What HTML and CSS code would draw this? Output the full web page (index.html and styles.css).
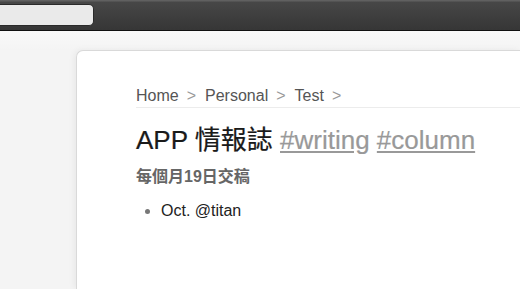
FILE: index.html
```html
<!DOCTYPE html>
<html>
<head>
<meta charset="utf-8">
<link rel="stylesheet" href="styles.css">
</head>
<body>
<header class="topbar">
  <div class="search"></div>
</header>
<main class="stage">
  <section class="card">
    <nav class="crumbs">
      <a class="crumb">Home</a><span class="sep">&gt;</span><a class="crumb">Personal</a><span class="sep">&gt;</span><a class="crumb">Test</a><span class="sep">&gt;</span>
    </nav>
    <h1 class="title">APP 情報誌 <a class="tag">#writing</a> <a class="tag">#column</a></h1>
    <p class="sub">每個月19日交稿</p>
    <ul class="list">
      <li>Oct. @titan</li>
    </ul>
  </section>
</main>
</body>
</html>
```
FILE: styles.css
```css
html, body {
  margin: 0;
  padding: 0;
  height: 100%;
  overflow: hidden;
}
body {
  display: flex;
  flex-direction: column;
  font-family: "Helvetica Neue", "Liberation Sans", Arial, "Noto Sans CJK TC", sans-serif;
  font-size: 16px;
  background: #f5f5f5;
  color: #222;
}
.topbar {
  flex: none;
  height: 31px;
  padding-top: 4px;
  box-sizing: border-box;
  background: linear-gradient(#606060 0, #606060 1px, #474747 2px, #3c3c3c 20px, #363636 30px);
  border-bottom: 1px solid #111;
}
.search {
  width: 94px;
  height: 22px;
  background: #eaeaea;
  border: 1px solid #2a2a2a;
  border-left: none;
  border-radius: 0 5px 5px 0;
  box-sizing: border-box;
}
.stage {
  flex: 1;
  display: flex;
  flex-direction: column;
  min-height: 0;
  padding: 19px 0 0 76px;
  background: linear-gradient(#f9f9f9, #f4f4f4 19px, #f4f4f4);
}
.card {
  flex: 1;
  background: #fff;
  border: 1px solid #d9d9d9;
  border-right: none;
  border-bottom: none;
  border-top-left-radius: 7px;
  box-shadow: -2px 0 6px rgba(0, 0, 0, 0.05);
  padding: 35px 0 0 59px;
}
.crumbs {
  line-height: 20px;
  padding-bottom: 1px;
  border-bottom: 1px solid #ececec;
  color: #555;
}
.crumb {
  color: #555;
}
.sep {
  color: #999;
  margin: 0 9px 0 8px;
}
.title {
  margin: 16px 0 0;
  font-size: 26px;
  font-weight: normal;
  line-height: 32px;
  color: #1a1a1a;
  -webkit-text-stroke: 0.2px #1a1a1a;
}
.tag {
  color: #999;
  -webkit-text-stroke: 0.2px #999;
  text-decoration: underline;
  text-decoration-color: #999;
}
.sub {
  margin: 11px 0 0;
  font-size: 16px;
  font-weight: bold;
  line-height: 20px;
  color: #666;
}
.list {
  margin: 14px 0 0;
  padding-left: 25px;
  line-height: 20px;
  font-size: 16px;
}
.list li::marker {
  color: #777;
}
```
